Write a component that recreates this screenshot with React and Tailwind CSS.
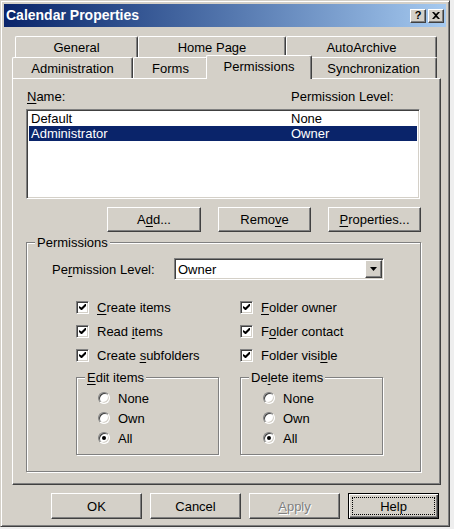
import React from "react";

const RAISED =
  "bg-[#d4d0c8] border border-t-white border-l-white border-r-[#404040] border-b-[#404040] shadow-[inset_-1px_-1px_0_#808080]";
const SUNKEN =
  "border border-t-[#808080] border-l-[#808080] border-r-white border-b-white shadow-[inset_1px_1px_0_#404040,inset_-1px_-1px_0_#d4d0c8]";

function U({ children }) {
  return <span className="underline underline-offset-[2px] decoration-1">{children}</span>;
}

function TitleBtn({ children }) {
  return (
    <div className={`${RAISED} w-[16px] h-[14px] flex items-center justify-center`}>{children}</div>
  );
}

function Tab({ w, children, selected }) {
  if (selected) {
    return (
      <div
        className={`${w} relative z-10 -mx-[2px] -mt-[2px] h-[24px] bg-[#d4d0c8] border-t border-l border-t-white border-l-white border-r border-r-[#404040] shadow-[inset_-1px_0_0_#808080] rounded-t-[2px] flex justify-center pt-[3px]`}
      >
        {children}
      </div>
    );
  }
  return (
    <div
      className={`${w} h-[21px] bg-[#d4d0c8] border-t border-l border-t-white border-l-white border-r border-r-[#404040] shadow-[inset_-1px_0_0_#808080] rounded-t-[2px] flex justify-center pt-[3px]`}
    >
      {children}
    </div>
  );
}

function Button({ w, h, children, disabled }) {
  return (
    <div className={`${RAISED} ${w} ${h} flex items-center justify-center`}>
      <span className={disabled ? "text-[#808080] [text-shadow:1px_1px_0_#fff]" : ""}>{children}</span>
    </div>
  );
}

function Check({ children }) {
  return (
    <div className="h-[24px] flex items-center gap-[8px]">
      <div className={`${SUNKEN} w-[13px] h-[13px] bg-white flex items-center justify-center`}>
        <svg width="7" height="7" viewBox="0 0 7 7">
          <path d="M0 2 L0 4 L2 6 L3 6 L7 2 L7 0 L6 0 L2.5 3.5 Z" fill="#000" />
        </svg>
      </div>
      <span>{children}</span>
    </div>
  );
}

function Radio({ checked, children }) {
  return (
    <div className="h-[20px] flex items-center gap-[8px]">
      <div className="w-[12px] h-[12px] rounded-full bg-white border border-t-[#808080] border-l-[#808080] border-r-white border-b-white shadow-[inset_1px_1px_0_#404040,inset_-1px_-1px_0_#d4d0c8] flex items-center justify-center">
        {checked && <div className="w-[4px] h-[4px] rounded-full bg-black" />}
      </div>
      <span>{children}</span>
    </div>
  );
}

function Group({ className, legend, children }) {
  return (
    <div
      className={`relative border border-[#808080] shadow-[inset_1px_1px_0_#fff,1px_1px_0_#fff] ${className}`}
    >
      <span className="absolute -top-[8px] left-[8px] bg-[#d4d0c8] px-[2px] leading-[15px]">{legend}</span>
      {children}
    </div>
  );
}

export default function App() {
  return (
    <div className="w-[454px] h-[529px] bg-[#eeeeee] font-['Liberation_Sans',Arial,sans-serif] text-[13px] leading-[15px] text-black">
      <div className="w-[450px] h-[527px] bg-[#d4d0c8] border border-t-[#d4d0c8] border-l-[#d4d0c8] border-r-[#404040] border-b-[#404040] shadow-[inset_1px_1px_0_#fff,inset_-1px_-1px_0_#808080] p-[3px] flex flex-col">
        {/* Title bar */}
        <div className="h-[23px] flex items-center pl-[2px] pr-[2px] bg-linear-to-r from-[#0a246a] to-[#a6caf0]">
          <span className="text-white font-bold text-[14px]">Calendar Properties</span>
          <div className="ml-auto flex gap-[2px]">
            <TitleBtn>
              <span className="font-bold text-[11px] leading-[11px]">?</span>
            </TitleBtn>
            <TitleBtn>
              <svg width="8" height="7" viewBox="0 0 8 7">
                <path d="M0 0 L2 0 L4 2 L6 0 L8 0 L5 3.5 L8 7 L6 7 L4 5 L2 7 L0 7 L3 3.5 Z" fill="#000" />
              </svg>
            </TitleBtn>
          </div>
        </div>

        {/* Body */}
        <div className="mt-[9px] ml-[8px] w-[429px] flex flex-col">
          {/* Tabs */}
          <div className="h-[21px] flex pl-[3px]">
            <Tab w="w-[123px]">General</Tab>
            <Tab w="w-[148px]">Home Page</Tab>
            <Tab w="w-[151px]">AutoArchive</Tab>
          </div>
          <div className="h-[21px] flex">
            <Tab w="w-[121px]">Administration</Tab>
            <Tab w="w-[75px]">Forms</Tab>
            <Tab w="w-[106px]" selected>
              Permissions
            </Tab>
            <Tab w="w-[127px]">Synchronization</Tab>
          </div>

          {/* Panel */}
          <div className="w-[429px] h-[407px] border border-t-white border-l-white border-r-[#404040] border-b-[#404040] shadow-[inset_-1px_-1px_0_#808080] pl-[13px] pr-[19px] pt-[10px] flex flex-col">
            <div className="flex h-[15px]">
              <span className="w-[265px] pl-[1px]">
                <U>N</U>ame:
              </span>
              <span>Permission Level:</span>
            </div>

            <div className={`${SUNKEN} mt-[5px] w-[394px] h-[90px] bg-white px-[2px] pt-[1px]`}>
              <div className="h-[15px] flex">
                <span className="w-[262px] pl-[2px]">Default</span>
                <span>None</span>
              </div>
              <div className="h-[15px] flex bg-[#0a246a] text-white">
                <span className="w-[262px] pl-[2px]">Administrator</span>
                <span>Owner</span>
              </div>
            </div>

            <div className="mt-[8px] flex justify-end gap-[17px]">
              <Button w="w-[94px]" h="h-[25px]">
                A<U>d</U>d...
              </Button>
              <Button w="w-[93px]" h="h-[25px]">
                Remo<U>v</U>e
              </Button>
              <Button w="w-[93px]" h="h-[25px]">
                <U>P</U>roperties...
              </Button>
            </div>

            <Group className="mt-[10px] w-[395px] h-[230px] pl-[25px] pt-[15px]" legend="Permissions">
              <div className="flex items-center h-[22px]">
                <span className="w-[122px]">
                  Pe<U>r</U>mission Level:
                </span>
                <div className={`${SUNKEN} w-[210px] h-[22px] bg-white flex items-center p-[1px]`}>
                  <span className="pl-[2px]">Owner</span>
                  <div className={`${RAISED} ml-auto w-[17px] h-[18px] flex items-center justify-center`}>
                    <svg width="7" height="4" viewBox="0 0 7 4">
                      <path d="M0 0 L7 0 L3.5 4 Z" fill="#000" />
                    </svg>
                  </div>
                </div>
              </div>

              <div className="mt-[15px] ml-[24px] flex">
                <div className="w-[164px] flex flex-col">
                  <Check>
                    <U>C</U>reate items
                  </Check>
                  <Check>
                    Read <U>i</U>tems
                  </Check>
                  <Check>
                    Create <U>s</U>ubfolders
                  </Check>
                </div>
                <div className="flex flex-col">
                  <Check>
                    <U>F</U>older owner
                  </Check>
                  <Check>
                    F<U>o</U>lder contact
                  </Check>
                  <Check>
                    Folder visi<U>b</U>le
                  </Check>
                </div>
              </div>

              <div className="mt-[10px] ml-[24px] flex gap-[21px]">
                <Group
                  className="w-[143px] h-[78px] pl-[21px] pt-[10px]"
                  legend={
                    <>
                      <U>E</U>dit items
                    </>
                  }
                >
                  <Radio>None</Radio>
                  <Radio>Own</Radio>
                  <Radio checked>All</Radio>
                </Group>
                <Group
                  className="w-[143px] h-[78px] pl-[22px] pt-[10px]"
                  legend={
                    <>
                      De<U>l</U>ete items
                    </>
                  }
                >
                  <Radio>None</Radio>
                  <Radio>Own</Radio>
                  <Radio checked>All</Radio>
                </Group>
              </div>
            </Group>
          </div>
        </div>

        {/* Bottom buttons */}
        <div className="mt-[8px] flex justify-end pr-[7px] gap-[8px]">
          <Button w="w-[91px]" h="h-[26px]">OK</Button>
          <Button w="w-[91px]" h="h-[26px]">Cancel</Button>
          <Button w="w-[91px]" h="h-[26px]" disabled>
            <U>A</U>pply
          </Button>
          <div className="w-[91px] h-[26px] bg-[#d4d0c8] border border-black shadow-[inset_1px_1px_0_#fff,inset_-1px_-1px_0_#404040,inset_-2px_-2px_0_#808080] p-[3px] flex">
            <div className="flex-1 border border-dotted border-black flex items-center justify-center">Help</div>
          </div>
        </div>
      </div>
    </div>
  );
}
